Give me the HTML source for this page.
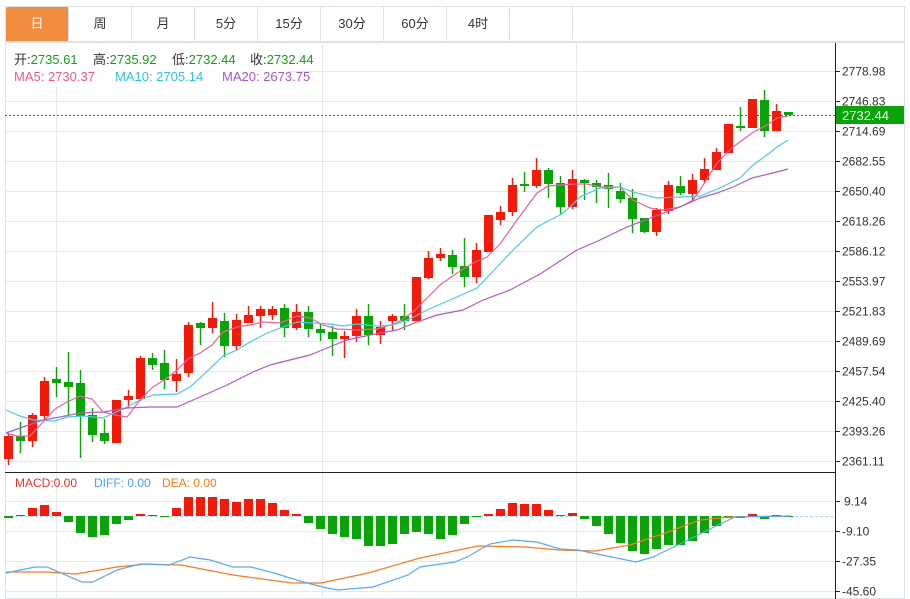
<!DOCTYPE html>
<html><head><meta charset="utf-8">
<style>
html,body{margin:0;padding:0;background:#fff;width:910px;height:599px;overflow:hidden;font-family:"Liberation Sans","Noto Sans CJK SC",sans-serif;}
.tabs{position:absolute;left:5px;top:6px;height:36px;width:900px;border:1px solid #dde3ea;box-sizing:border-box;display:flex;}
.tab{width:63px;height:34px;line-height:34px;text-align:center;font-size:13px;color:#333;border-right:1px solid #dde3ea;box-sizing:border-box;}
.tab.on{background:#f28c3e;color:#fff;border-radius:2px 0 0 0;}
svg{position:absolute;left:0;top:0;}
</style></head><body>
<div class="tabs"><div class="tab on">日</div><div class="tab">周</div><div class="tab">月</div><div class="tab">5分</div><div class="tab">15分</div><div class="tab">30分</div><div class="tab">60分</div><div class="tab">4时</div><div class="tab"></div></div>
<svg width="910" height="599" viewBox="0 0 910 599" font-family="Liberation Sans, Noto Sans CJK SC, sans-serif">
<!-- frame -->
<rect x="5.5" y="42.5" width="899" height="556" fill="none" stroke="#dde3ea"/>
<g stroke="#e3e9ef" stroke-width="1">
<line x1="5" y1="71.5" x2="835" y2="71.5"/><line x1="5" y1="101.5" x2="835" y2="101.5"/><line x1="5" y1="131.5" x2="835" y2="131.5"/><line x1="5" y1="161.5" x2="835" y2="161.5"/><line x1="5" y1="191.5" x2="835" y2="191.5"/><line x1="5" y1="221.5" x2="835" y2="221.5"/><line x1="5" y1="251.5" x2="835" y2="251.5"/><line x1="5" y1="281.5" x2="835" y2="281.5"/><line x1="5" y1="311.5" x2="835" y2="311.5"/><line x1="5" y1="341.5" x2="835" y2="341.5"/><line x1="5" y1="371.5" x2="835" y2="371.5"/><line x1="5" y1="401.5" x2="835" y2="401.5"/><line x1="5" y1="431.5" x2="835" y2="431.5"/><line x1="5" y1="461.5" x2="835" y2="461.5"/>
<line x1="5" y1="501.5" x2="835" y2="501.5"/><line x1="5" y1="531.5" x2="835" y2="531.5"/><line x1="5" y1="561.5" x2="835" y2="561.5"/><line x1="5" y1="591.5" x2="835" y2="591.5"/>
<line x1="56.5" y1="43" x2="56.5" y2="599"/><line x1="322.5" y1="43" x2="322.5" y2="599"/><line x1="576.5" y1="43" x2="576.5" y2="599"/>
</g>
<line x1="5" y1="472.5" x2="836" y2="472.5" stroke="#222"/>
<line x1="835.5" y1="43" x2="835.5" y2="599" stroke="#222"/>
<!-- axis ticks & labels -->
<g stroke="#222"><line x1="835" y1="71.5" x2="840" y2="71.5"/><line x1="835" y1="101.5" x2="840" y2="101.5"/><line x1="835" y1="131.5" x2="840" y2="131.5"/><line x1="835" y1="161.5" x2="840" y2="161.5"/><line x1="835" y1="191.5" x2="840" y2="191.5"/><line x1="835" y1="221.5" x2="840" y2="221.5"/><line x1="835" y1="251.5" x2="840" y2="251.5"/><line x1="835" y1="281.5" x2="840" y2="281.5"/><line x1="835" y1="311.5" x2="840" y2="311.5"/><line x1="835" y1="341.5" x2="840" y2="341.5"/><line x1="835" y1="371.5" x2="840" y2="371.5"/><line x1="835" y1="401.5" x2="840" y2="401.5"/><line x1="835" y1="431.5" x2="840" y2="431.5"/><line x1="835" y1="461.5" x2="840" y2="461.5"/><line x1="835" y1="501.5" x2="840" y2="501.5"/><line x1="835" y1="531.5" x2="840" y2="531.5"/><line x1="835" y1="561.5" x2="840" y2="561.5"/><line x1="835" y1="591.5" x2="840" y2="591.5"/></g>
<g font-size="12" fill="#333">
<text x="842" y="75.5">2778.98</text><text x="842" y="105.5">2746.83</text><text x="842" y="135.5">2714.69</text><text x="842" y="165.5">2682.55</text><text x="842" y="195.5">2650.40</text><text x="842" y="225.5">2618.26</text><text x="842" y="255.5">2586.12</text><text x="842" y="285.5">2553.97</text><text x="842" y="315.5">2521.83</text><text x="842" y="345.5">2489.69</text><text x="842" y="375.5">2457.54</text><text x="842" y="405.5">2425.40</text><text x="842" y="435.5">2393.26</text><text x="842" y="465.5">2361.11</text>
<text x="844" y="505.5">9.14</text><text x="842" y="535.5">-9.10</text><text x="842" y="565.5">-27.35</text><text x="842" y="595.5">-45.60</text>
</g>
<!-- current price -->
<line x1="5" y1="115.5" x2="835" y2="115.5" stroke="#0a9a0a" stroke-dasharray="2,2"/>
<rect x="836" y="106" width="68" height="18" fill="#0aa30a"/>
<text x="842" y="120" font-size="13" fill="#fff">2732.44</text>
<!-- candles -->
<g id="c"></g>
<g stroke-width="1.4">
<line x1="8.5" y1="433" x2="8.5" y2="465" stroke="#f21a0b"/><rect x="4" y="436" width="9" height="23" fill="#f21a0b"/>
<line x1="20.5" y1="422" x2="20.5" y2="453" stroke="#0aa30a"/><rect x="16" y="436" width="9" height="5" fill="#0aa30a"/>
<line x1="32.5" y1="413" x2="32.5" y2="447" stroke="#f21a0b"/><rect x="28" y="415" width="9" height="26" fill="#f21a0b"/>
<line x1="44.5" y1="377" x2="44.5" y2="420" stroke="#f21a0b"/><rect x="40" y="381" width="9" height="35" fill="#f21a0b"/>
<line x1="56.5" y1="367" x2="56.5" y2="397" stroke="#0aa30a"/><rect x="52" y="379" width="9" height="4" fill="#0aa30a"/>
<line x1="68.5" y1="352" x2="68.5" y2="415" stroke="#0aa30a"/><rect x="64" y="382" width="9" height="5" fill="#0aa30a"/>
<line x1="80.5" y1="370" x2="80.5" y2="458" stroke="#0aa30a"/><rect x="76" y="383" width="9" height="33" fill="#0aa30a"/>
<line x1="92.5" y1="408" x2="92.5" y2="442" stroke="#0aa30a"/><rect x="88" y="415" width="9" height="20" fill="#0aa30a"/>
<line x1="104.5" y1="419" x2="104.5" y2="444" stroke="#0aa30a"/><rect x="100" y="433" width="9" height="8" fill="#0aa30a"/>
<rect x="112" y="400" width="9" height="43" fill="#f21a0b"/>
<line x1="128.5" y1="390" x2="128.5" y2="408" stroke="#f21a0b"/><rect x="124" y="396" width="9" height="4" fill="#f21a0b"/>
<line x1="140.5" y1="356" x2="140.5" y2="401" stroke="#f21a0b"/><rect x="136" y="358" width="9" height="41" fill="#f21a0b"/>
<line x1="152.5" y1="353" x2="152.5" y2="370" stroke="#0aa30a"/><rect x="148" y="358" width="9" height="7" fill="#0aa30a"/>
<line x1="164.5" y1="350" x2="164.5" y2="389" stroke="#0aa30a"/><rect x="160" y="363" width="9" height="17" fill="#0aa30a"/>
<line x1="176.5" y1="359" x2="176.5" y2="392" stroke="#f21a0b"/><rect x="172" y="374" width="9" height="7" fill="#f21a0b"/>
<line x1="188.5" y1="322" x2="188.5" y2="377" stroke="#f21a0b"/><rect x="184" y="325" width="9" height="48" fill="#f21a0b"/>
<line x1="200.5" y1="322" x2="200.5" y2="345" stroke="#0aa30a"/><rect x="196" y="323" width="9" height="5" fill="#0aa30a"/>
<line x1="212.5" y1="302" x2="212.5" y2="333" stroke="#f21a0b"/><rect x="208" y="318" width="9" height="10" fill="#f21a0b"/>
<line x1="224.5" y1="313" x2="224.5" y2="357" stroke="#0aa30a"/><rect x="220" y="321" width="9" height="25" fill="#0aa30a"/>
<line x1="236.5" y1="314" x2="236.5" y2="350" stroke="#f21a0b"/><rect x="232" y="320" width="9" height="26" fill="#f21a0b"/>
<line x1="248.5" y1="306" x2="248.5" y2="323" stroke="#f21a0b"/><rect x="244" y="315" width="9" height="8" fill="#f21a0b"/>
<line x1="260.5" y1="306" x2="260.5" y2="328" stroke="#f21a0b"/><rect x="256" y="309" width="9" height="7" fill="#f21a0b"/>
<line x1="272.5" y1="306" x2="272.5" y2="320" stroke="#f21a0b"/><rect x="268" y="309" width="9" height="6" fill="#f21a0b"/>
<line x1="284.5" y1="304" x2="284.5" y2="337" stroke="#0aa30a"/><rect x="280" y="308" width="9" height="20" fill="#0aa30a"/>
<line x1="296.5" y1="304" x2="296.5" y2="330" stroke="#f21a0b"/><rect x="292" y="312" width="9" height="16" fill="#f21a0b"/>
<line x1="308.5" y1="306" x2="308.5" y2="337" stroke="#0aa30a"/><rect x="304" y="312" width="9" height="17" fill="#0aa30a"/>
<line x1="320.5" y1="323" x2="320.5" y2="341" stroke="#0aa30a"/><rect x="316" y="329" width="9" height="4" fill="#0aa30a"/>
<line x1="332.5" y1="326" x2="332.5" y2="356" stroke="#0aa30a"/><rect x="328" y="332" width="9" height="7" fill="#0aa30a"/>
<line x1="344.5" y1="331" x2="344.5" y2="358" stroke="#f21a0b"/><rect x="340" y="336" width="9" height="3" fill="#f21a0b"/>
<line x1="356.5" y1="309" x2="356.5" y2="342" stroke="#f21a0b"/><rect x="352" y="316" width="9" height="20" fill="#f21a0b"/>
<line x1="368.5" y1="304" x2="368.5" y2="345" stroke="#0aa30a"/><rect x="364" y="316" width="9" height="19" fill="#0aa30a"/>
<line x1="380.5" y1="321" x2="380.5" y2="344" stroke="#f21a0b"/><rect x="376" y="327" width="9" height="8" fill="#f21a0b"/>
<line x1="392.5" y1="314" x2="392.5" y2="331" stroke="#f21a0b"/><rect x="388" y="316" width="9" height="5" fill="#f21a0b"/>
<line x1="404.5" y1="304" x2="404.5" y2="330" stroke="#0aa30a"/><rect x="400" y="316" width="9" height="5" fill="#0aa30a"/>
<rect x="412" y="277" width="9" height="44" fill="#f21a0b"/>
<line x1="428.5" y1="251" x2="428.5" y2="279" stroke="#f21a0b"/><rect x="424" y="258" width="9" height="20" fill="#f21a0b"/>
<line x1="440.5" y1="248" x2="440.5" y2="261" stroke="#f21a0b"/><rect x="436" y="254" width="9" height="4" fill="#f21a0b"/>
<line x1="452.5" y1="250" x2="452.5" y2="274" stroke="#0aa30a"/><rect x="448" y="255" width="9" height="12" fill="#0aa30a"/>
<line x1="464.5" y1="238" x2="464.5" y2="287" stroke="#0aa30a"/><rect x="460" y="266" width="9" height="11" fill="#0aa30a"/>
<line x1="476.5" y1="243" x2="476.5" y2="283" stroke="#f21a0b"/><rect x="472" y="250" width="9" height="27" fill="#f21a0b"/>
<rect x="484" y="215" width="9" height="37" fill="#f21a0b"/>
<line x1="500.5" y1="206" x2="500.5" y2="225" stroke="#f21a0b"/><rect x="496" y="212" width="9" height="8" fill="#f21a0b"/>
<line x1="512.5" y1="178" x2="512.5" y2="216" stroke="#f21a0b"/><rect x="508" y="185" width="9" height="27" fill="#f21a0b"/>
<line x1="524.5" y1="172" x2="524.5" y2="192" stroke="#0aa30a"/><rect x="520" y="184" width="9" height="2" fill="#0aa30a"/>
<line x1="536.5" y1="158" x2="536.5" y2="188" stroke="#f21a0b"/><rect x="532" y="170" width="9" height="16" fill="#f21a0b"/>
<line x1="548.5" y1="168" x2="548.5" y2="198" stroke="#0aa30a"/><rect x="544" y="170" width="9" height="14" fill="#0aa30a"/>
<line x1="560.5" y1="176" x2="560.5" y2="214" stroke="#0aa30a"/><rect x="556" y="183" width="9" height="24" fill="#0aa30a"/>
<line x1="572.5" y1="170" x2="572.5" y2="209" stroke="#f21a0b"/><rect x="568" y="179" width="9" height="28" fill="#f21a0b"/>
<line x1="584.5" y1="179" x2="584.5" y2="200" stroke="#0aa30a"/><rect x="580" y="180" width="9" height="3" fill="#0aa30a"/>
<line x1="596.5" y1="180" x2="596.5" y2="203" stroke="#0aa30a"/><rect x="592" y="183" width="9" height="4" fill="#0aa30a"/>
<line x1="608.5" y1="173" x2="608.5" y2="208" stroke="#0aa30a"/><rect x="604" y="185" width="9" height="4" fill="#0aa30a"/>
<line x1="620.5" y1="183" x2="620.5" y2="203" stroke="#0aa30a"/><rect x="616" y="191" width="9" height="8" fill="#0aa30a"/>
<line x1="632.5" y1="189" x2="632.5" y2="233" stroke="#0aa30a"/><rect x="628" y="198" width="9" height="21" fill="#0aa30a"/>
<line x1="644.5" y1="218" x2="644.5" y2="233" stroke="#0aa30a"/><rect x="640" y="218" width="9" height="14" fill="#0aa30a"/>
<line x1="656.5" y1="208" x2="656.5" y2="236" stroke="#f21a0b"/><rect x="652" y="210" width="9" height="22" fill="#f21a0b"/>
<line x1="668.5" y1="181" x2="668.5" y2="214" stroke="#f21a0b"/><rect x="664" y="185" width="9" height="26" fill="#f21a0b"/>
<line x1="680.5" y1="176" x2="680.5" y2="195" stroke="#0aa30a"/><rect x="676" y="186" width="9" height="7" fill="#0aa30a"/>
<line x1="692.5" y1="174" x2="692.5" y2="200" stroke="#f21a0b"/><rect x="688" y="180" width="9" height="14" fill="#f21a0b"/>
<line x1="704.5" y1="158" x2="704.5" y2="183" stroke="#f21a0b"/><rect x="700" y="169" width="9" height="11" fill="#f21a0b"/>
<line x1="716.5" y1="148" x2="716.5" y2="170" stroke="#f21a0b"/><rect x="712" y="152" width="9" height="18" fill="#f21a0b"/>
<rect x="724" y="124" width="9" height="29" fill="#f21a0b"/>
<line x1="740.5" y1="107" x2="740.5" y2="131" stroke="#0aa30a"/><rect x="736" y="126" width="9" height="2" fill="#0aa30a"/>
<rect x="748" y="99" width="9" height="29" fill="#f21a0b"/>
<line x1="764.5" y1="90" x2="764.5" y2="137" stroke="#0aa30a"/><rect x="760" y="100" width="9" height="31" fill="#0aa30a"/>
<line x1="776.5" y1="104" x2="776.5" y2="131" stroke="#f21a0b"/><rect x="772" y="111" width="9" height="20" fill="#f21a0b"/>
<rect x="784" y="112" width="9" height="3" fill="#0aa30a"/>
</g>
<!-- MAs -->
<g fill="none" stroke-width="1.2">
<polyline stroke="#f0609a" points="6,433 17,436 30,436 43,422 55,409 67,402 80,396 92,399 103,412 115,415 127,417 140,400 153,387 167,378 177,370 188,359 200,353 212,345 223,332 237,327 250,325 263,322 280,323 297,316 310,318 323,325 337,329 357,330 377,329 397,323 413,312 427,298 440,285 457,273 473,263 487,257 500,244 517,220 537,193 548,186 573,184 587,184 600,187 620,187 633,200 650,208 663,210 680,207 693,200 700,190 717,163 733,147 752,133 767,125 777,118 788,116"/>
<polyline stroke="#4dc9e6" points="6,410 20,416 33,420 55,421 67,417 83,416 103,418 127,407 140,400 153,395 177,394 190,387 200,378 223,356 237,350 250,342 267,333 283,327 297,322 313,323 330,324 343,326 357,324 377,326 393,325 410,319 427,310 450,300 477,288 497,267 513,250 537,227 550,220 560,215 570,207 580,197 600,188 620,187 633,192 657,198 680,197 700,196 720,188 740,178 753,165 767,155 777,147 788,140"/>
<polyline stroke="#b05cc8" points="6,433 23,427 43,420 60,417 80,413 103,412 127,408 150,407 177,407 200,397 227,385 253,372 270,365 310,355 327,348 347,340 370,335 397,330 417,322 437,315 463,310 483,300 510,290 540,274 577,250 600,240 627,227 653,217 680,207 700,198 717,193 733,187 752,178 773,173 788,169"/>
</g>
<!-- MACD -->
<line x1="5" y1="516.5" x2="835" y2="516.5" stroke="#a8dfe8" stroke-dasharray="3,2"/>
<g fill="#0aa30a">
<rect x="4" y="516" width="9" height="2"/><rect x="64" y="516" width="9" height="6"/><rect x="76" y="516" width="9" height="17"/><rect x="88" y="516" width="9" height="21"/><rect x="100" y="516" width="9" height="19"/><rect x="112" y="516" width="9" height="8"/><rect x="124" y="516" width="9" height="4"/><rect x="160" y="516" width="9" height="1"/>
<rect x="304" y="516" width="9" height="7"/><rect x="316" y="516" width="9" height="13"/><rect x="328" y="516" width="9" height="18"/><rect x="340" y="516" width="9" height="21"/><rect x="352" y="516" width="9" height="23"/><rect x="364" y="516" width="9" height="30"/><rect x="376" y="516" width="9" height="30"/><rect x="388" y="516" width="9" height="28"/><rect x="400" y="516" width="9" height="18"/><rect x="412" y="516" width="9" height="16"/><rect x="424" y="516" width="9" height="18"/><rect x="436" y="516" width="9" height="23"/><rect x="448" y="516" width="9" height="19"/><rect x="460" y="516" width="9" height="8"/><rect x="472" y="516" width="9" height="1"/>
<rect x="580" y="516" width="9" height="3"/><rect x="592" y="516" width="9" height="10"/><rect x="604" y="516" width="9" height="18"/><rect x="616" y="516" width="9" height="27"/><rect x="628" y="516" width="9" height="35"/><rect x="640" y="516" width="9" height="38"/><rect x="652" y="516" width="9" height="33"/><rect x="664" y="516" width="9" height="29"/><rect x="676" y="516" width="9" height="29"/><rect x="688" y="516" width="9" height="25"/><rect x="700" y="516" width="9" height="17"/><rect x="712" y="516" width="9" height="10"/><rect x="724" y="516" width="9" height="2"/><rect x="736" y="516" width="9" height="2"/><rect x="760" y="516" width="9" height="3"/><rect x="784" y="516" width="9" height="1"/>
</g>
<g fill="#f21a0b">
<rect x="16" y="515" width="9" height="1"/><rect x="28" y="508" width="9" height="8"/><rect x="40" y="505" width="9" height="11"/><rect x="52" y="512" width="9" height="4"/><rect x="136" y="514" width="9" height="2"/><rect x="148" y="515" width="9" height="1"/>
<rect x="172" y="508" width="9" height="8"/><rect x="184" y="497" width="9" height="19"/><rect x="196" y="497" width="9" height="19"/><rect x="208" y="497" width="9" height="19"/><rect x="220" y="499" width="9" height="17"/><rect x="232" y="502" width="9" height="14"/><rect x="244" y="499" width="9" height="17"/><rect x="256" y="499" width="9" height="17"/><rect x="268" y="503" width="9" height="13"/><rect x="280" y="510" width="9" height="6"/><rect x="292" y="514" width="9" height="2"/>
<rect x="484" y="514" width="9" height="2"/><rect x="496" y="509" width="9" height="7"/><rect x="508" y="503" width="9" height="13"/><rect x="520" y="504" width="9" height="12"/><rect x="532" y="504" width="9" height="12"/><rect x="544" y="510" width="9" height="6"/><rect x="556" y="515" width="9" height="1"/><rect x="568" y="513" width="9" height="3"/>
<rect x="748" y="514" width="9" height="2"/><rect x="772" y="515" width="9" height="1"/>
</g>
<g fill="none" stroke-width="1.2">
<polyline stroke="#f57c20" points="6,572 47,572 76,574 117,567 146,564 181,565 233,575 292,583 321,583 368,573 420,558 478,546 525,547 560,550 595,551 630,545 665,533 700,520 729,517 790,516"/>
<polyline stroke="#5aa9f0" points="6,573 35,567 47,567 82,582 93,582 117,570 140,564 169,565 190,557 210,560 233,567 251,567 274,573 303,582 327,588 338,590 373,587 408,575 420,567 455,562 467,557 490,544 513,540 537,542 560,549 578,550 607,556 636,562 653,557 688,540 712,528 735,517 790,516"/>
</g>
<!-- legends -->
<rect x="6" y="44" width="283" height="42" fill="#fff" fill-opacity="0.85"/>
<g font-size="13">
<text x="14" y="64" fill="#333">开:<tspan fill="#1a9c1a">2735.61</tspan></text>
<text x="93" y="64" fill="#333">高:<tspan fill="#1a9c1a">2735.92</tspan></text>
<text x="172" y="64" fill="#333">低:<tspan fill="#1a9c1a">2732.44</tspan></text>
<text x="250" y="64" fill="#333">收:<tspan fill="#1a9c1a">2732.44</tspan></text>
<text x="14" y="81" fill="#ee5a8c">MA5: 2730.37</text>
<text x="115" y="81" fill="#35c0dc">MA10: 2705.14</text>
<text x="222" y="81" fill="#a857c9">MA20: 2673.75</text>
</g>
<g font-size="12">
<text x="15" y="487" fill="#e8332a">MACD:0.00</text>
<text x="94" y="487" fill="#4aa2ef">DIFF: 0.00</text>
<text x="162" y="487" fill="#f57c20">DEA: 0.00</text>
</g>
</svg>
</body></html>
